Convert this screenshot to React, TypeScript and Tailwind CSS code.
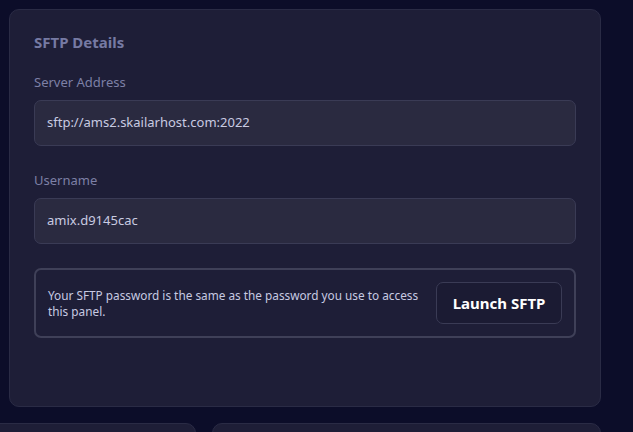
export default function App() {
  return (
    <div
      className="h-[432px] w-full overflow-hidden bg-[#0c0d29] pt-[9px] pl-[9px] pr-[32px]"
      style={{ fontFamily: '"Noto Sans", "Open Sans", sans-serif' }}
    >
      {/* SFTP card */}
      <div className="flex h-[398px] w-[592px] flex-col rounded-[10px] border border-[#2a2b45] bg-[#1e1e37] px-[24px] pt-[22px]">
        <h2 className="text-[15px] font-bold leading-5 text-[#767aa3]">SFTP Details</h2>

        <label className="mt-[20px] text-[13px] leading-5 text-[#7d80a6]">Server Address</label>
        <div className="mt-[8px] flex h-[46px] items-center rounded-[7px] border border-[#3a3b55] bg-[#2a2a40] px-[12px] text-[13px] text-[#c9cbe2]">
          sftp://ams2.skailarhost.com:2022
        </div>

        <label className="mt-[24px] text-[13px] leading-5 text-[#7d80a6]">Username</label>
        <div className="mt-[8px] flex h-[46px] items-center rounded-[7px] border border-[#3a3b55] bg-[#2a2a40] px-[12px] text-[13px] text-[#c9cbe2]">
          amix.d9145cac
        </div>

        <div className="mt-[24px] flex h-[70px] items-center gap-2 rounded-[7px] border-2 border-[#3f4058] pl-[12px] pr-[12px]">
          <p className="flex-1 text-[11.8px] leading-[16px] text-[#c7cae2]">
            Your SFTP password is the same as the password you use to access this panel.
          </p>
          <button className="h-[42px] w-[126px] shrink-0 rounded-[7px] border border-[#3a3b55] bg-[#1b1b33] text-[15px] font-bold text-white">
            Launch SFTP
          </button>
        </div>
      </div>

      {/* Lower cards */}
      <div className="mt-[16px] ml-[-20px] flex gap-[16px]">
        <div className="h-[60px] w-[207px] rounded-[10px] border border-[#2a2b45] bg-[#1e1e37]" />
        <div className="h-[60px] w-[390px] rounded-[10px] border border-[#2a2b45] bg-[#1e1e37]" />
      </div>
    </div>
  );
}
